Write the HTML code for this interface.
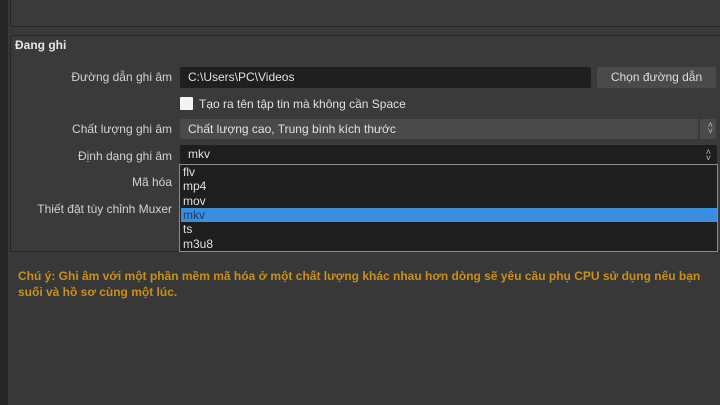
<!DOCTYPE html>
<html><head><meta charset="utf-8"><style>
*{margin:0;padding:0;box-sizing:border-box}
body{width:720px;height:405px;overflow:hidden;background:#2f2f2f;font-family:"Liberation Sans","DejaVu Sans",sans-serif;font-size:12px;color:#d8d8d8;position:relative}
.leftbar{position:absolute;left:0;top:0;width:8px;height:405px;background:#262626}
.main{position:absolute;left:8px;top:0;right:0;bottom:0;background:#383838}
.box{position:absolute;border:1px solid #262626;border-radius:3px;background:#3a3a3a}
.lbl{position:absolute;text-align:right;width:164px;left:8px;color:#d2d2d2}
.f{position:absolute;border-radius:2px}
.arr{position:absolute;right:6px;color:#bbb;font-size:9px;line-height:6px;text-align:center}
.it{position:absolute;left:181px;width:536px;height:14px;padding-left:2px;color:#e0e0e0;line-height:14px}
</style></head><body>
<div class="leftbar"></div>
<div class="main"></div>
<div class="box" style="left:10px;top:-5px;width:720px;height:32px"></div>
<div class="box" style="left:10px;top:35px;width:720px;height:217px"></div>
<div style="position:absolute;left:15px;top:38px;font-weight:bold;color:#e6e6e6">Đang ghi</div>

<div class="lbl" style="top:70px">Đường dẫn ghi âm</div>
<div class="f" style="left:180px;top:67px;width:411px;height:21px;background:#1f1f1f;padding:3px 8px;color:#e0e0e0">C:\Users\PC\Videos</div>
<div class="f" style="left:597px;top:67px;width:119px;height:21px;background:#4a4a4a;text-align:center;line-height:21px;color:#dcdcdc">Chọn đường dẫn</div>

<div style="position:absolute;left:180px;top:97px;width:13px;height:13px;background:#f4f4f4;border-radius:1px"></div>
<div style="position:absolute;left:199px;top:97px;color:#e0e0e0">Tạo ra tên tập tin mà không cần Space</div>

<div class="lbl" style="top:122px">Chất lượng ghi âm</div>
<div class="f" style="left:180px;top:119px;width:518px;height:20px;background:#4a4a4a;padding:3px 8px;color:#e0e0e0">Chất lượng cao, Trung bình kích thước</div>
<div class="f" style="left:700px;top:119px;width:16px;height:20px;background:#4a4a4a"><div class="arr" style="right:3px;top:3px">˄<br>˅</div></div>

<div class="lbl" style="top:149px">Định dạng ghi âm</div>
<div class="f" style="left:180px;top:145px;width:537px;height:19px;background:#1e1e1e;padding:2px 8px;color:#e0e0e0">mkv<div class="arr" style="top:4px">˄<br>˅</div></div>

<div class="lbl" style="top:175px">Mã hóa</div>
<div class="lbl" style="top:202px">Thiết đặt tùy chỉnh Muxer</div>

<div style="position:absolute;left:179px;top:164px;width:539px;height:88px;background:#1e1e1e;border:1px solid #8a8a8a"></div>
<div class="it" style="top:165px">flv</div>
<div class="it" style="top:179px">mp4</div>
<div class="it" style="top:194px">mov</div>
<div class="it" style="top:208px;background:#3a8ede;color:#1c3b66">mkv</div>
<div class="it" style="top:222px">ts</div>
<div class="it" style="top:237px">m3u8</div>

<div style="position:absolute;left:18px;top:268px;width:690px;font-weight:bold;color:#c8901a;line-height:16px">Chú ý: Ghi âm với một phần mềm mã hóa ở một chất lượng khác nhau hơn dòng sẽ yêu cầu phụ CPU sử dụng nếu bạn suối và hồ sơ cùng một lúc.</div>
</body></html>
